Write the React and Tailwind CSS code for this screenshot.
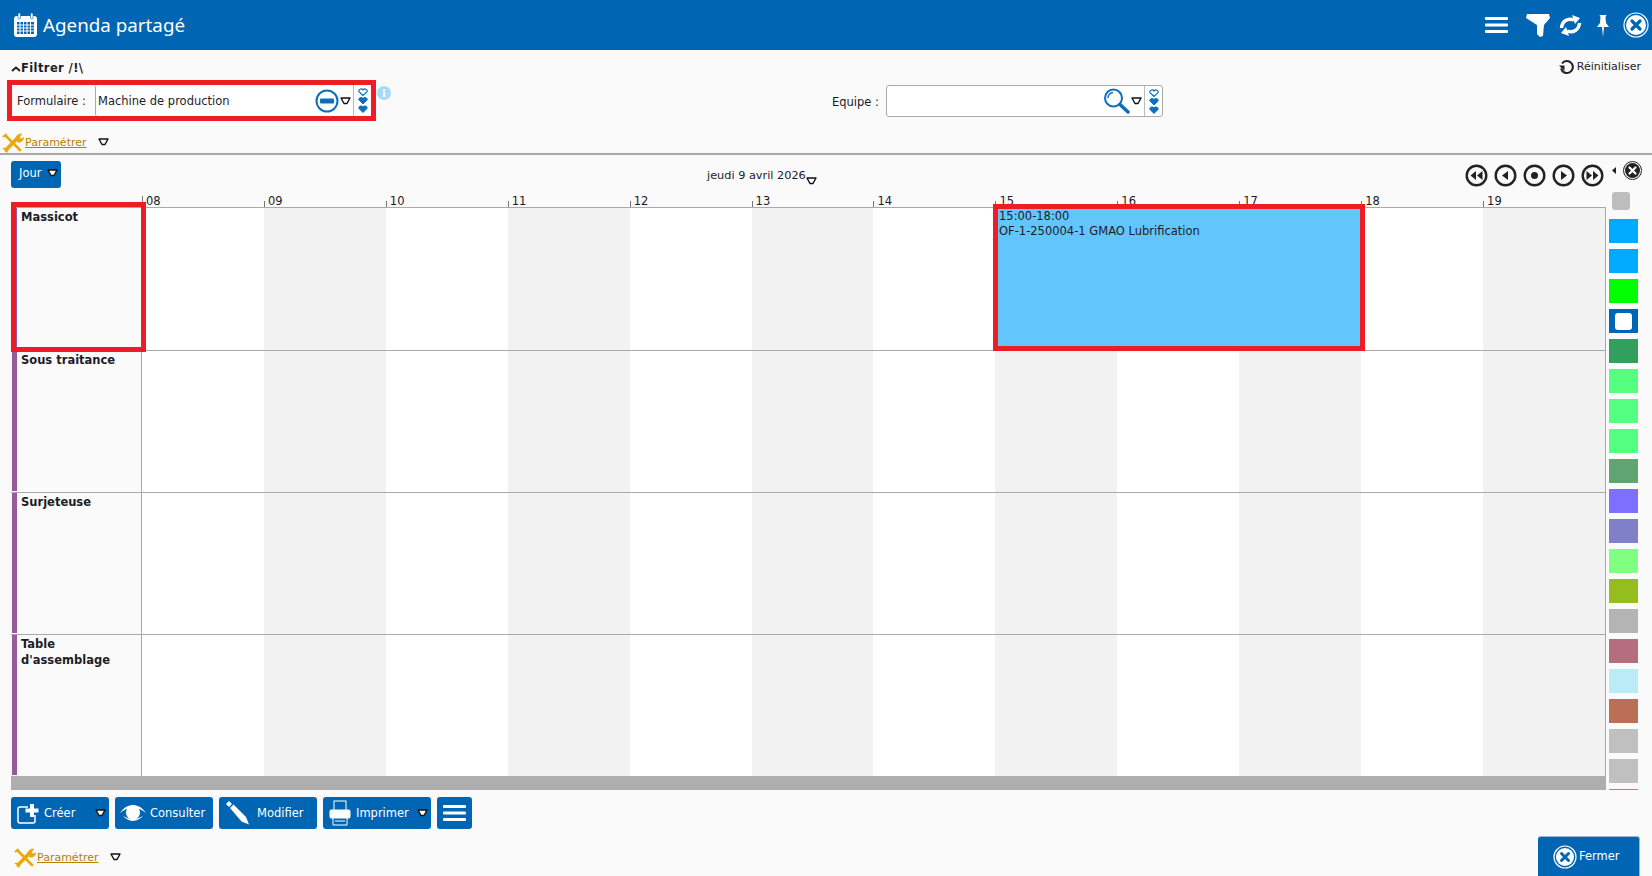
import React from 'react';

const hours = ['08', '09', '10', '11', '12', '13', '14', '15', '16', '17', '18', '19'];
const rows = ['Massicot', 'Sous traitance', 'Surjeteuse', "Table d'assemblage"];
const swatches = ['#00aaff', '#00aaff', '#00ff00', '#0066b3', '#31a05f', '#55ff80', '#55ff80', '#55ff80', '#60a571', '#7f6fff', '#8080c8', '#80ff80', '#94bd1e', '#b4b4b4', '#b56e80', '#bbebf6', '#bb7056', '#c0c0c0', '#c0c0c0', '#c08070'];

const Caret = ({ className = '' }) => (
  <svg width="11" height="8" viewBox="0 0 11 8" className={className}>
    <path d="M1 1h9L7 6.500H4z" fill="#fff" stroke="#111" strokeWidth="1.400" strokeLinejoin="round" />
  </svg>
);

const Hearts = () => (
  <svg width="10" height="25" viewBox="0 0 10 25" fill="#0b6fbd" stroke="#0b6fbd">
    <path d="M5 7.500 1 3.600C0 1.500 3.500-.2 5 2c1.500-2.200 5-.5 4 1.600z" fill="#fff" strokeWidth="1.200" />
    <path d="M5 16 1 12C0 10 3.500 8.300 5 10.500 6.500 8.300 10 10 9 12z" />
    <path d="M5 24.500 1 20.500C0 18.500 3.500 16.800 5 19 6.500 16.800 10 18.500 9 20.500z" />
  </svg>
);

const Wrench = () => (
  <svg width="22" height="20" viewBox="0 0 22 20" fill="none" stroke="#eaa80f" strokeLinecap="round">
    <path d="M4 3l14 14" strokeWidth="2.600" />
    <path d="M1.500 3.500 4 1.500" strokeWidth="2" />
    <path d="M4 17 15 5.500" strokeWidth="3.600" />
    <path d="M14 6c-.5-3 2-5.500 6-5l-2.500 3 1.500 2 2.500-1.500c.5 3.500-3 5.500-6 4.500z" fill="#eaa80f" strokeWidth=".6" />
    <path d="M1.500 15.500c2-.5 4 1.500 3.500 3.500" strokeWidth="1.500" />
  </svg>
);

const Param = () => (
  <div className="flex items-center">
    <Wrench />
    <span className="text-[#b57f00] text-[11px] underline ml-[1px]">Paramétrer</span>
    <Caret className="ml-[11px] mb-[2px]" />
  </div>
);

const NavBtn = ({ children }) => (
  <svg width="23" height="23" viewBox="0 0 23 23" fill="#222">
    <circle cx="11.500" cy="11.500" r="9.800" fill="#fafafa" stroke="#222" strokeWidth="2.400" />
    {children}
  </svg>
);

const Btn = ({ w, icon, label, caret, iw = 'w-[36px]' }) => (
  <div className={`${w} h-[32px] bg-[#0066b3] rounded-[3px] flex items-center text-white relative`}>
    <div className={`${iw} flex justify-center shrink-0`}>{icon}</div>
    <span className="mt-[2px]">{label}</span>
    {caret && <Caret className="ml-auto mr-[3px]" />}
  </div>
);

export default function App() {
  return (
    <div className="w-[1652px] h-[876px] bg-[#fafafa] flex flex-col overflow-hidden font-['DejaVu_Sans',sans-serif] text-[11.500px] text-[#1c1c28]">
      <header className="h-[50px] shrink-0 bg-[#0066b3] flex items-center text-white">
        <svg width="26" height="26" viewBox="0 0 26 26" className="ml-[13px]">
          <rect x="1" y="4" width="23" height="21" rx="3" fill="#fff" />
          <rect x="5" y="1" width="2.500" height="6" rx="1" fill="#fff" stroke="#0066b3" strokeWidth=".6" />
          <rect x="17.500" y="1" width="2.500" height="6" rx="1" fill="#fff" stroke="#0066b3" strokeWidth=".6" />
          <path d="M4 10h17v12H4z" fill="#0066b3" />
          <path d="M4 13h17M4 16h17M4 19h17M7 10v12M10.500 10v12M14 10v12M17.500 10v12" stroke="#fff" strokeWidth="1" />
        </svg>
        <h1 className="text-[18.800px] ml-[4px] font-['Noto_Sans',sans-serif]">Agenda partagé</h1>
        <div className="ml-auto flex items-center">
          <svg width="23" height="18" viewBox="0 0 23 18" fill="#fff"><rect y="1" width="23" height="3" rx="1" /><rect y="7.500" width="23" height="3" rx="1" /><rect y="14" width="23" height="3" rx="1" /></svg>
          <svg width="24" height="23" viewBox="0 0 24 23" fill="#fff" className="ml-[18px]"><path d="M1 0h22l1 4-6 7-1 11-3 1-3-3V11L0 4z" /></svg>
          <svg width="23" height="21" viewBox="0 0 23 21" fill="none" stroke="#fff" strokeWidth="3.500" className="ml-[9px]">
            <path d="M2.500 13C3 6 9 2.500 15 5" />
            <path d="M20.500 8C20 15 14 18.500 8 16" />
            <path d="M13 0l8 3-5 6zM10 21l-8-3 5-6z" fill="#fff" stroke="none" />
          </svg>
          <svg width="12" height="23" viewBox="0 0 12 23" fill="#fff" className="ml-[15px]"><path d="M2.500 1h7l-1 2 .5 6 3 4H0l3-4 .5-6zM5 13h2l-1 10z" /></svg>
          <svg width="26" height="26" viewBox="0 0 26 26" className="ml-[14px] mr-[3px]">
            <circle cx="13" cy="13" r="12" fill="none" stroke="#fff" strokeWidth="1.200" />
            <circle cx="13" cy="13" r="10" fill="#fff" />
            <path d="M9 9l8 8M17 9l-8 8" stroke="#0066b3" strokeWidth="3.200" strokeLinecap="round" />
          </svg>
        </div>
      </header>

      <section className="h-[105px] shrink-0 border-b-2 border-[#a8a8a8] relative">
        <div className="flex items-center h-[30px] pl-[11px] pr-[11px] pt-[8px]">
          <svg width="10" height="6" viewBox="0 0 10 6" fill="none" stroke="#222" strokeWidth="2"><path d="M1 5l4-3.500L9 5" /></svg>
          <span className="font-bold tracking-[0.4px]">Filtrer /!\</span>
          <div className="ml-auto flex items-center mt-[-4px] text-[11px]">
            <svg width="16" height="15" viewBox="0 0 16 15" fill="none" stroke="#222" strokeWidth="2">
              <path d="M3 3.500A6 6 0 1 1 2 8.500" />
              <path d="M0 5.500h5.500V11z" fill="#222" stroke="none" />
            </svg>
            <span className="ml-[2px]">Réinitialiser</span>
          </div>
        </div>
        <div className="flex items-start">
          <div className="ml-[7px] w-[369px] h-[41px] border-[5px] border-[#ee1c25] flex items-center shrink-0">
            <span className="w-[83px] pl-[5px] shrink-0 mt-[3px]">Formulaire :</span>
            <div className="flex-1 h-full bg-white border-l border-[#aaa] rounded-l-[2px] flex items-center pl-[2px]">
              <span className="mt-[3px]">Machine de production</span>
              <svg width="24" height="24" viewBox="0 0 24 24" className="ml-auto">
                <circle cx="12" cy="12" r="10.500" fill="#fff" stroke="#0b6fbd" strokeWidth="2" />
                <rect x="5" y="9.500" width="14" height="5" rx="1" fill="#0b6fbd" />
              </svg>
              <Caret className="ml-[1px]" />
              <div className="w-px h-full bg-[#bbb] ml-[2px]" />
              <div className="w-[17px] flex justify-center"><Hearts /></div>
            </div>
          </div>
          <svg width="14" height="14" viewBox="0 0 14 14" className="ml-[1px] mt-[6px] shrink-0">
            <circle cx="7" cy="7" r="7" fill="#a9d8fb" />
            <rect x="6" y="6" width="2.200" height="5" fill="#fff" />
            <rect x="6" y="3" width="2.200" height="2" fill="#fff" />
          </svg>
          <span className="ml-[441px] mt-[14px] w-[54px] shrink-0">Equipe :</span>
          <div className="w-[277px] h-[32px] mt-[5px] bg-white border border-[#aaa] rounded-[3px] flex items-center justify-end shrink-0">
            <svg width="27" height="26" viewBox="0 0 27 26" fill="none" stroke="#0b6fbd">
              <circle cx="10.500" cy="10" r="8.500" strokeWidth="2" />
              <path d="M5 10a5.500 5.500 0 0 1 5-5.500" strokeWidth="1.500" />
              <path d="M17 16.500l8 7.500" strokeWidth="3.500" strokeLinecap="round" />
            </svg>
            <Caret className="ml-[1px]" />
            <div className="w-px h-full bg-[#bbb] ml-[2px]" />
            <div className="w-[17px] flex justify-center"><Hearts /></div>
          </div>
        </div>
        <div className="mt-[12px] pl-[2px]"><Param /></div>
      </section>

      <div className="flex-1 min-h-0 flex flex-col">
        <div className="h-[34px] shrink-0 flex items-center relative pt-[4px]">
          <div className="ml-[11px] w-[50px] h-[27px] bg-[#0066b3] rounded-[3px] flex items-center pl-[8px] text-white">
            Jour<Caret className="ml-[6px] mb-[2px]" />
          </div>
          <div className="flex items-center ml-[646px] mt-[5px]">
            <span className="text-[11.300px]">jeudi 9 avril 2026</span>
            <Caret className="mt-[9px]" />
          </div>
          <div className="ml-auto flex items-center mr-[10px] mt-[3px]">
            <div className="flex gap-[6px]">
              <NavBtn><path d="M11 7v9L5.500 11.500zM17.500 7v9L12 11.500z" /></NavBtn>
              <NavBtn><path d="M14 7v9L8 11.500z" /></NavBtn>
              <NavBtn><circle cx="11.500" cy="11.500" r="3.500" /></NavBtn>
              <NavBtn><path d="M9 7v9l6-4.500z" /></NavBtn>
              <NavBtn><path d="M5.500 7v9l5.500-4.500zM12 7v9l5.500-4.500z" /></NavBtn>
            </div>
            <svg width="5" height="7" viewBox="0 0 5 7" fill="#222" className="ml-[8px] mb-[10px]"><path d="M4 0v7L0 3.500z" /></svg>
            <svg width="19" height="19" viewBox="0 0 19 19" className="ml-[6px] mb-[10px]">
              <circle cx="9.500" cy="9.500" r="9" fill="none" stroke="#222" />
              <circle cx="9.500" cy="9.500" r="7.500" fill="#222" />
              <path d="M6.500 6.500l6 6M12.500 6.500l-6 6" stroke="#fff" strokeWidth="2.200" strokeLinecap="round" />
            </svg>
          </div>
        </div>

        <div className="flex h-[601px] shrink-0">
          <div className="w-[1595px] ml-[11px] shrink-0 flex flex-col">
            <div className="h-[18px] shrink-0 flex pl-[131px] pr-[1px]">
              <div className="flex-1 grid grid-cols-12">
                {hours.map((h, i) => (
                  <div key={h} className="relative flex items-end">
                    <div className={`absolute left-0 bottom-0 border-l border-[#777] ${i === 0 ? 'h-[11px]' : 'h-[6px]'}`} />
                    <span className="pl-[4px] leading-[16px] mb-[-2px]">{h}</span>
                  </div>
                ))}
              </div>
            </div>
            <div className="flex-1 flex flex-col border-t border-r border-[#aaa]">
              {rows.map((name, r) => (
                <div key={name} className="h-[142px] first:h-[143px] last:h-[141px] shrink-0 flex border-b border-[#aaa] last:border-b-0">
                  <div className="w-[131px] shrink-0 border-r border-[#aaa] flex relative">
                    <div className="w-[5px] ml-[1px] mb-[1px] bg-[#955c9b]" />
                    <div className="pl-[4px] pt-[1px] font-bold leading-[16px] w-[100px]">{name}</div>
                    {r === 0 && <div className="absolute z-10 left-0 -top-[6px] w-[135px] h-[150px] border-[5px] border-[#ee1c25]" />}
                  </div>
                  <div className="flex-1 grid grid-cols-12 relative">
                    {hours.map((h, i) => (
                      <div key={h} className={i % 2 ? 'bg-[#f2f2f2]' : 'bg-white'} />
                    ))}
                    {r === 0 && (
                      <div className="absolute left-[851px] -top-[4px] w-[372px] h-[147px] border-[5px] border-[#ee1c25] bg-[#62c5fb] leading-[15px] pl-[1px]">
                        <div>15:00-18:00</div>
                        <div>OF-1-250004-1 GMAO Lubrification</div>
                      </div>
                    )}
                  </div>
                </div>
              ))}
            </div>
            <div className="h-[14px] shrink-0 bg-[#aeaeae]" />
          </div>
          <div className="flex-1 min-w-0 overflow-hidden flex flex-col pl-[3px]">
            <div className="w-[18px] h-[18px] shrink-0 mt-[3px] ml-[3px] rounded-[3px] bg-[#bdbdbd]" />
            <div className="mt-[9px] flex flex-col gap-[6px]">
              {swatches.map((c, i) => (
                <div key={i} className="w-[29px] h-[24px] shrink-0 flex items-center justify-center" style={{ background: c }}>
                  {i === 3 && <div className="w-[17px] h-[17px] bg-white rounded-[3px]" />}
                </div>
              ))}
            </div>
          </div>
        </div>

        <div className="flex-1 min-h-0 relative pl-[11px] pt-[7px]">
          <div className="flex gap-[6px]">
            <Btn w="w-[98px]" caret label="Créer" iw="w-[33px]" icon={
              <svg width="24" height="24" viewBox="0 0 24 24" fill="none" stroke="#fff" strokeWidth="1.500">
                <path d="M19 14v6a2 2 0 0 1-2 2H4a2 2 0 0 1-2-2V8a2 2 0 0 1 2-2h8" />
                <path d="M16 3v13M9.500 9.500h13" strokeWidth="4" />
              </svg>
            } />
            <Btn w="w-[98px]" label="Consulter" iw="w-[35px]" icon={
              <svg width="26" height="16" viewBox="0 0 26 16" fill="#fff">
                <path d="M0 8C4 2 9 0 13 0s9 2 13 8c-4-3-6-4-7-4a7 7 0 1 1-12 0C6 4 4 5 0 8z" />
                <path d="M3 11c2 2 6 5 10 5s8-3 10-5c-3 1-5 3-10 3s-7-2-10-3z" />
              </svg>
            } />
            <Btn w="w-[98px]" label="Modifier" iw="w-[38px]" icon={
              <svg width="24" height="24" viewBox="0 0 24 24" fill="#fff">
                <path d="M0 3 3 0l3 3-3 3z" />
                <path d="M4 7l3.500-3.500L20 16l3 7.500-7.500-3z" />
              </svg>
            } />
            <Btn w="w-[108px]" caret label="Imprimer" iw="w-[33px]" icon={
              <svg width="22" height="26" viewBox="0 0 22 26" fill="none" stroke="#fff">
                <rect x="5" y="1" width="12" height="10" />
                <rect x="1" y="10" width="20" height="8" rx="1" fill="#fff" />
                <path d="M4 18v7h14v-7M6 21h10" />
              </svg>
            } />
            <div className="w-[35px] h-[32px] bg-[#0066b3] rounded-[3px] flex items-center justify-center">
              <svg width="23" height="18" viewBox="0 0 23 18" fill="#fff"><rect y="1" width="23" height="3" rx="1" /><rect y="7.500" width="23" height="3" rx="1" /><rect y="14" width="23" height="3" rx="1" /></svg>
            </div>
          </div>
          <div className="mt-[19px] pl-[3px]"><Param /></div>
          <div className="absolute right-[12px] bottom-0 w-[102px] h-[40px] bg-[#0066b3] rounded-t-[3px] border-t border-r border-[#9db7cc] flex items-center text-white">
            <svg width="24" height="24" viewBox="0 0 24 24" className="ml-[15px] mr-[2px]">
              <circle cx="12" cy="12" r="11" fill="none" stroke="#fff" strokeWidth="1.200" />
              <circle cx="12" cy="12" r="9" fill="#fff" />
              <path d="M8.500 8.500l7 7M15.500 8.500l-7 7" stroke="#0066b3" strokeWidth="3" strokeLinecap="round" />
            </svg>
            Fermer
          </div>
        </div>
      </div>
    </div>
  );
}
